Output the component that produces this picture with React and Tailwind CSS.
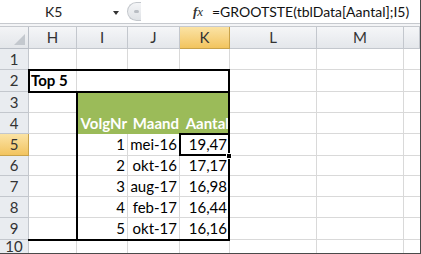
import React from 'react';

const cols = ['H', 'I', 'J', 'K', 'L', 'M', ''];
const rowHeights = [21, 22, 21, 21, 22, 20, 21, 21, 22, 14];

const data = {
  5: ['1', 'mei-16', '19,47'],
  6: ['2', 'okt-16', '17,17'],
  7: ['3', 'aug-17', '16,98'],
  8: ['4', 'feb-17', '16,44'],
  9: ['5', 'okt-17', '16,16'],
};

const font = { fontFamily: 'Lato, "Open Sans", sans-serif' };

const Cell = ({ children, className = '', h }) => (
  <div style={{ height: h }} className={`border-r border-b border-[#d9d9d9] flex items-center overflow-hidden whitespace-nowrap leading-none ${className}`}>
    {children}
  </div>
);

const App = () => {
  return (
    <div className="w-[421px] h-[254px] bg-white overflow-hidden border-r border-b border-[#4a4a4a] relative" style={font}>
      {/* Formula bar */}
      <div className="h-[24px] flex items-stretch border-b border-[#c6c9ce] bg-white">
        <div className="w-[127px] relative">
          <span className="absolute left-[45px] top-[4px] text-[14px] leading-[16px] text-[#222]">K5</span>
          <span className="absolute left-[113px] top-[11px] w-0 h-0 border-l-[3.5px] border-r-[3.5px] border-t-[4px] border-l-transparent border-r-transparent border-t-[#333]" />
        </div>
        <div className="w-[82px] flex items-center bg-white">
          <div className="w-[14px] h-[19px] rounded-l-full border border-r-0 border-[#c3c7cc] bg-gradient-to-b from-[#f4f5f7] to-[#dfe2e6] flex items-center justify-center">
            <div className="w-[5px] h-[3px] rounded-full bg-[#b9bdc3] ml-[3px]" />
          </div>
          <span className="ml-auto mr-[6px] italic text-[13px] text-[#333]" style={{ fontFamily: '"Liberation Serif", serif' }}>
            <b>f</b>x
          </span>
        </div>
        <div className="flex-1 flex items-center pl-[3px] text-[14px] text-[#111] whitespace-nowrap overflow-hidden">
          =GROOTSTE(tblData[Aantal];I5)
        </div>
      </div>
      <div className="h-[2px] bg-[#f3f4f6]" />

      {/* Sheet grid */}
      <div className="relative">
        <div className="grid grid-cols-[29px_48px_51px_52px_50px_87px_87px_1fr] border-t border-[#c6c9ce]">
          {/* header row */}
          <div className="h-[22px] border-r border-b border-[#b9bec6] bg-gradient-to-b from-[#f3f4f6] to-[#e3e6ea] relative">
            <svg className="absolute right-[3px] bottom-[3px]" width="11" height="11" viewBox="0 0 11 11">
              <polygon points="11,0 11,11 0,11" fill="#c3c8ce" />
            </svg>
          </div>
          {cols.map((c) => (
            <div
              key={c || 'n'}
              className={`h-[22px] border-r border-b flex items-center justify-center text-[15px] leading-none text-[#333] ${
                c === 'K'
                  ? 'bg-gradient-to-b from-[#fbe3a4] to-[#f2c45e] border-[#c8a24a]'
                  : 'bg-gradient-to-b from-[#f5f6f8] to-[#e4e7eb] border-[#c3c7cd]'
              }`}
            >
              {c}
            </div>
          ))}

          {rowHeights.map((h, i) => {
            const r = i + 1;
            const d = data[r];
            const green = r === 3 || r === 4;
            return (
              <React.Fragment key={r}>
                <div
                  style={{ height: h }}
                  className={`border-r border-b flex items-center justify-center text-[15px] leading-none text-[#333] ${
                    r === 5
                      ? 'bg-gradient-to-b from-[#fbe3a4] to-[#f2c45e] border-[#c8a24a]'
                      : 'bg-[#e9ecf0] border-[#c3c7cd]'
                  }`}
                >
                  {r}
                </div>
                <Cell h={h} className="pl-[2px] text-[15px] font-bold text-black">{r === 2 ? 'Top 5' : ''}</Cell>
                {r === 2 ? (
                  <>
                    <Cell h={h} className="border-r-0" />
                    <Cell h={h} className="border-r-0" />
                    <Cell h={h} />
                  </>
                ) : green ? (
                  ['VolgNr', 'Maand', 'Aantal'].map((t) => (
                    <div key={t} style={{ height: h }} className="bg-[#9bbb59] flex items-center justify-end pr-[1px] text-[15px] leading-none font-bold text-white whitespace-nowrap">
                      {r === 4 ? t : ''}
                    </div>
                  ))
                ) : (
                  [0, 1, 2].map((k) => (
                    <Cell h={h} key={k} className="justify-end pr-[2px] text-[15px] text-black">
                      {d ? d[k] : ''}
                    </Cell>
                  ))
                )}
                <Cell h={h} />
                <Cell h={h} />
                <Cell h={h} className="border-r-0" />
              </React.Fragment>
            );
          })}
        </div>

        {/* table borders */}
        <div className="absolute left-[28px] top-[43px] w-[202px] h-[24px] border-2 border-black pointer-events-none" />
        <div className="absolute left-[76px] top-[66px] w-[154px] h-[149px] border-2 border-black border-t-0 pointer-events-none" />
        <div className="absolute left-[28px] top-[213px] w-[50px] h-[2px] bg-black pointer-events-none" />
        {/* selected cell */}
        <div className="absolute left-[179px] top-[107px] w-[51px] h-[23px] border-2 border-black pointer-events-none" />
        <div className="absolute left-[226px] top-[127px] w-[6px] h-[6px] bg-black border border-white pointer-events-none" />
      </div>
    </div>
  );
};

export default App;
